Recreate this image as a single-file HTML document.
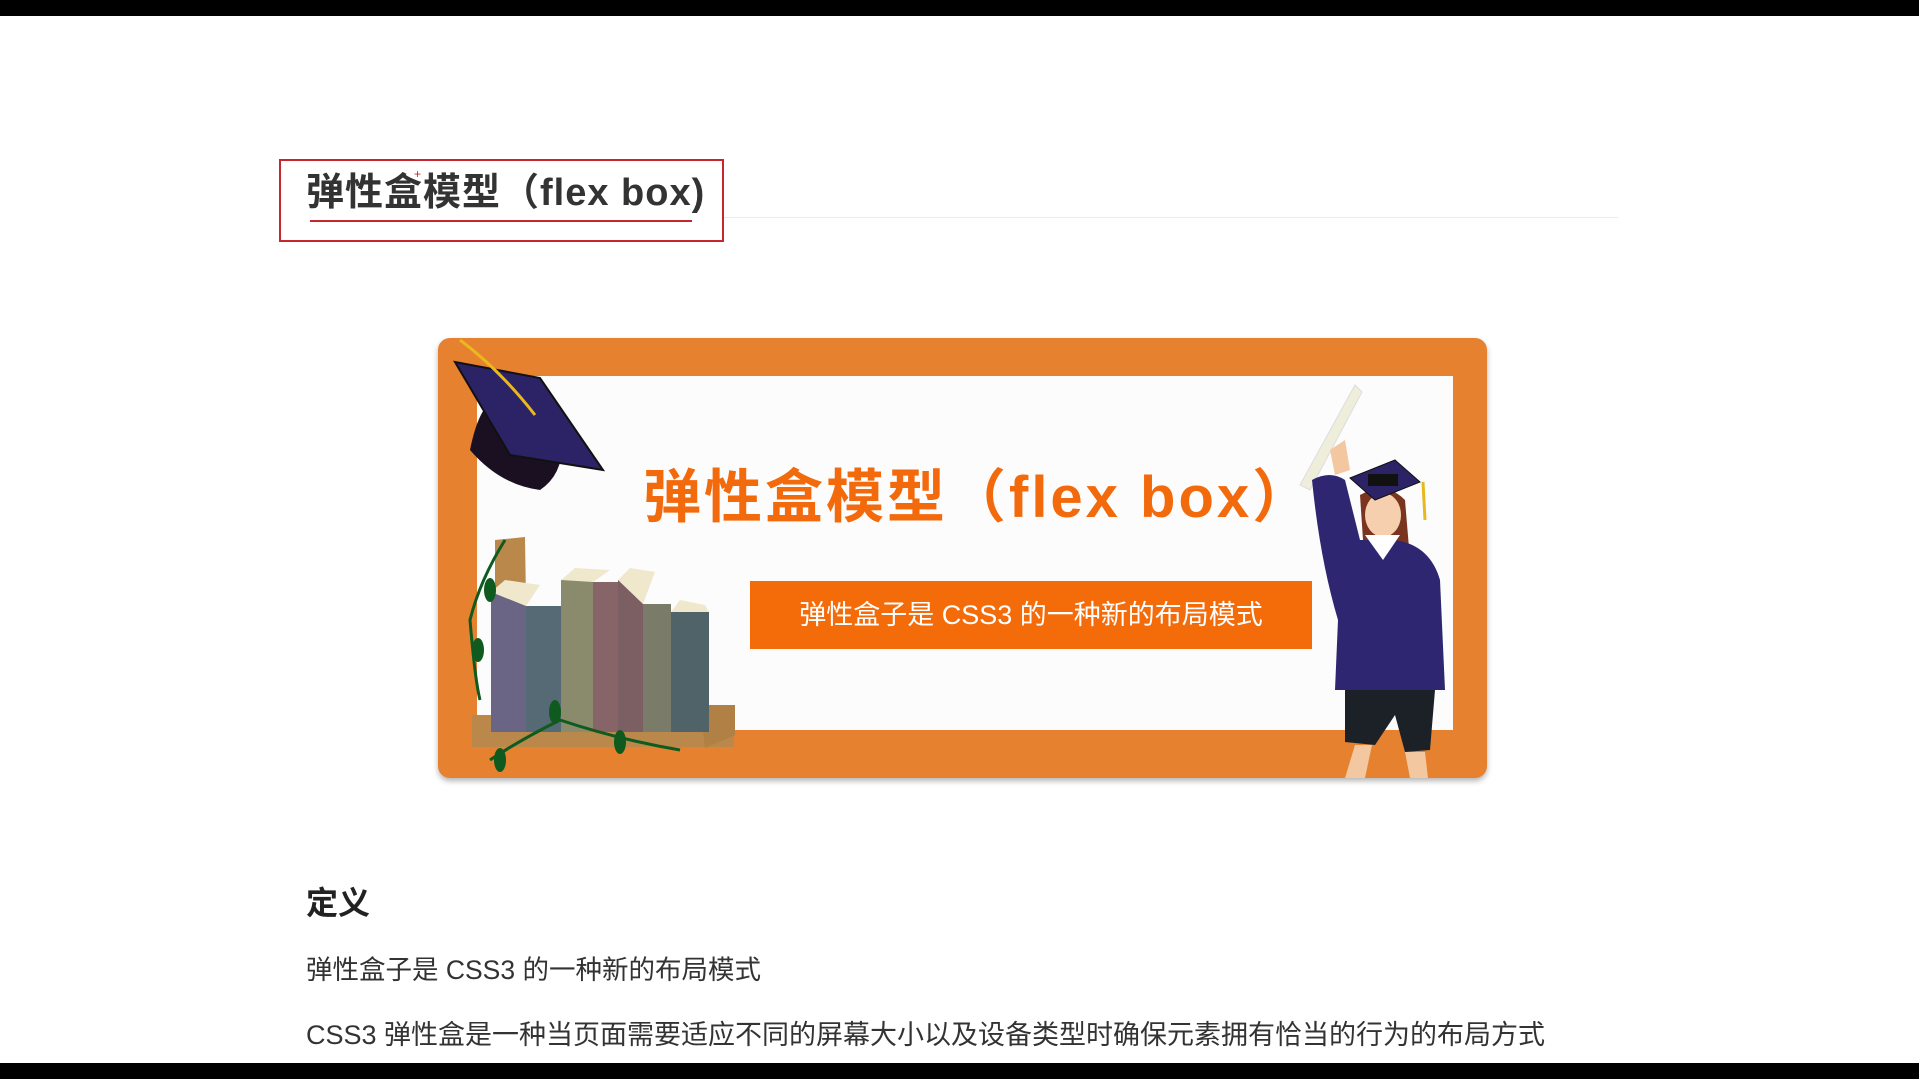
<!DOCTYPE html>
<html><head><meta charset="utf-8"><style>
html,body{margin:0;padding:0;width:1919px;height:1079px;overflow:hidden;background:#fff;font-family:"Liberation Sans","Noto Sans CJK SC",sans-serif;color:#333}
.a{position:absolute;white-space:nowrap}
</style></head><body>
<div class="a" style="left:0;top:0;width:1919px;height:16px;background:#000"></div>
<div class="a" style="left:0;top:1063px;width:1919px;height:16px;background:#000"></div>
<div class="a" style="left:723px;top:217px;width:895px;height:1px;background:#ececec"></div>
<div class="a" style="left:279px;top:159px;width:441px;height:79px;border:2px solid #c8262e"></div>
<div class="a" style="left:306px;top:168px;font-size:38px;font-weight:bold;line-height:50px;color:#333;letter-spacing:1px">弹性盒模型（flex box)</div>
<div class="a" style="left:310px;top:220px;width:382px;height:2px;background:#c8262e"></div>
<div class="a" style="left:414px;top:168px;color:#c8262e;font-size:12px;line-height:12px">+</div>

<div class="a" style="left:438px;top:338px;width:1049px;height:440px;background:#e6812f;border-radius:12px;box-shadow:0 3px 6px rgba(0,0,0,.3)"></div>
<div class="a" style="left:477px;top:376px;width:976px;height:354px;background:#fcfcfc"></div>
<div class="a" style="left:643px;top:462px;font-size:58px;font-weight:bold;color:#f26a0c;line-height:72px;letter-spacing:3px">弹性盒模型（flex box）</div>
<div class="a" style="left:750px;top:581px;width:562px;height:68px;background:#f46b0a"></div>
<div class="a" style="left:750px;top:581px;width:562px;height:68px;line-height:68px;text-align:center;color:#fff;font-size:27px">弹性盒子是 CSS3 的一种新的布局模式</div>

<svg class="a" style="left:0;top:0" width="1919" height="1079">
<path d="M470 450 Q480 400 500 398 L560 420 Q570 470 540 490 Q500 485 470 450Z" fill="#1a1022"/>
<path d="M455 362 L540 378 L603 470 L510 455Z" fill="#2c2266" stroke="#111" stroke-width="2"/>
<path d="M460 340 Q500 370 535 415" stroke="#e9b81d" stroke-width="3" fill="none"/>
<path d="M495 540 L525 537 L528 730 L495 740Z" fill="#b9884a"/>
<rect x="472" y="715" width="262" height="32" fill="#b9884a"/>
<path d="M700 705 L735 705 L735 735 L705 748Z" fill="#b08045"/>
<rect x="491" y="592" width="35" height="140" fill="#6b6585"/>
<rect x="526" y="606" width="36" height="126" fill="#566a75"/>
<rect x="561" y="580" width="32" height="152" fill="#8a8b6c"/>
<rect x="593" y="582" width="25" height="150" fill="#866468"/>
<rect x="618" y="580" width="25" height="152" fill="#7c5f63"/>
<rect x="643" y="604" width="28" height="128" fill="#7a7c69"/>
<rect x="671" y="612" width="38" height="120" fill="#4f6368"/>
<path d="M491 592 L505 580 L540 585 L526 606Z M561 580 L575 568 L610 570 L593 582 Z M618 580 L630 568 L655 572 L643 604Z M671 612 L680 600 L705 605 L709 612Z" fill="#efe8cc"/>
<path d="M505 540 Q480 580 470 620 Q475 680 480 700 M490 760 Q520 740 560 720 Q620 740 680 750" stroke="#0f5a1e" stroke-width="3" fill="none"/>
<ellipse cx="490" cy="590" rx="6" ry="12" fill="#0f5a1e"/><ellipse cx="478" cy="650" rx="6" ry="12" fill="#0f5a1e"/>
<ellipse cx="500" cy="760" rx="6" ry="12" fill="#0f5a1e"/><ellipse cx="555" cy="712" rx="6" ry="12" fill="#0f5a1e"/><ellipse cx="620" cy="742" rx="6" ry="12" fill="#0f5a1e"/>
<path d="M1300 485 L1355 385 L1362 392 L1310 490Z" fill="#eeeeda" stroke="#ddd" />
<path d="M1330 450 L1345 440 L1350 470 L1335 475Z" fill="#f3c7a0"/>
<path d="M1360 495 Q1385 480 1405 500 L1410 560 L1365 570Z" fill="#7a3520"/>
<ellipse cx="1383" cy="515" rx="18" ry="22" fill="#f6cfae"/>
<path d="M1312 480 Q1330 470 1345 480 L1360 540 L1395 540 Q1430 545 1440 580 L1445 690 L1335 690 L1338 620 Q1320 560 1312 480Z" fill="#2e2670"/>
<path d="M1365 535 L1383 560 L1400 535Z" fill="#fff"/>
<path d="M1345 690 L1435 690 L1430 750 L1405 752 L1395 715 L1375 745 L1345 742Z" fill="#1c2128"/>
<path d="M1355 745 L1372 745 L1365 778 L1345 778Z M1405 752 L1425 752 L1428 778 L1410 778Z" fill="#f3c7a0"/>
<path d="M1350 478 L1395 460 L1420 482 L1375 500Z" fill="#2c2266" stroke="#111"/>
<rect x="1368" y="474" width="30" height="12" fill="#111"/>
<line x1="1423" y1="482" x2="1425" y2="520" stroke="#e9b81d" stroke-width="3"/>
</svg>

<div class="a" style="left:306px;top:882px;font-size:32px;font-weight:bold;line-height:42px;color:#222">定义</div>
<div class="a" style="left:306px;top:952px;font-size:26.5px;line-height:36px;color:#333">弹性盒子是 CSS3 的一种新的布局模式</div>
<div class="a" style="left:306px;top:1017px;font-size:27px;line-height:36px;color:#333">CSS3 弹性盒是一种当页面需要适应不同的屏幕大小以及设备类型时确保元素拥有恰当的行为的布局方式</div>
</body></html>
